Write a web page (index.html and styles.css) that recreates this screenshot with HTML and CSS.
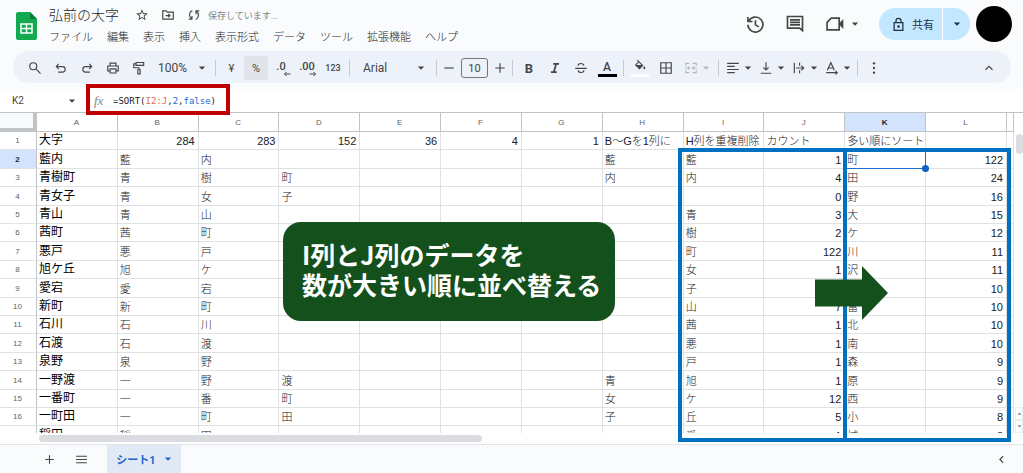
FILE: index.html
```html
<!DOCTYPE html>
<html lang="ja">
<head>
  <meta charset="UTF-8"/>
  <meta name="viewport" content="width=device-width, initial-scale=1.0"/>
  <title>弘前の大字</title>
  <link rel="stylesheet" href="styles.css">
</head>
<body>

<svg class="sprite" aria-hidden="true">
  <symbol id="caret" viewBox="0 0 8 8"><path d="M0.8 2.4h6.4L4 5.8z" fill="currentColor"/></symbol>
</svg>

<header class="top">
  <svg class="logo" viewBox="0 0 22 28">
    <path d="M2 0h12l7 7v19a2 2 0 0 1-2 2H2a2 2 0 0 1-2-2V2a2 2 0 0 1 2-2z" fill="#12a94f"/>
    <path d="M14 0l7 7h-7z" fill="#0b7f39"/>
    <path d="M5 12h11v9H5zM5 16.500h11M10.500 12v9" fill="none" stroke="#fff" stroke-width="1.500"/>
  </svg>

  <div class="doc">
    <div class="title-row">
      <h1>弘前の大字</h1>
      <button class="mini" aria-label="スター"><svg viewBox="0 0 24 24"><path d="M22 9.24l-7.19-.62L12 2 9.19 8.63 2 9.24l5.46 4.73L5.82 21 12 17.27 18.18 21l-1.63-7.03L22 9.24zM12 15.4l-3.76 2.27 1-4.28-3.32-2.88 4.38-.38L12 6.1l1.71 4.04 4.38.38-3.32 2.88 1 4.28L12 15.4z" fill="currentColor"/></svg></button>
      <button class="mini" aria-label="移動"><svg viewBox="0 0 24 24"><path d="M3 5h6l2 2h10v12H3z M8 13h7 M12.5 10l3 3-3 3" class="line"/></svg></button>
      <button class="mini" aria-label="同期"><svg viewBox="0 0 24 24"><path d="M9 4.500a8 8 0 0 0-1 14 M3 19h5.500v-5.500 M15 19.500a8 8 0 0 0 1-14 M21 5h-5.500v5.500" class="line"/></svg></button>
      <span class="status">保存しています...</span>
    </div>
    <nav class="menu">
      <button>ファイル</button>
      <button>編集</button>
      <button>表示</button>
      <button>挿入</button>
      <button>表示形式</button>
      <button>データ</button>
      <button>ツール</button>
      <button>拡張機能</button>
      <button>ヘルプ</button>
    </nav>
  </div>

  <div class="actions">
    <button class="action" aria-label="変更履歴"><svg viewBox="0 0 24 24"><path d="M4.500 8.500A9 9 0 1 1 3.500 13 M3.500 3.500V9H9 M12.500 7.500V13l4 2.500" class="line"/></svg></button>
    <button class="action" aria-label="コメント"><svg viewBox="0 0 24 24"><path d="M3 3h18v17l-3.500-3H3z M6 7h12M6 10h12M6 13h12" class="line"/></svg></button>
    <button class="action meet" aria-label="会議"><svg viewBox="0 0 24 24"><path d="M7.500 5H17v14H2.500v-9z" class="line"/><path d="M17 11l5-5v12l-5-5z" fill="currentColor"/></svg><svg class="caret"><use href="#caret"/></svg></button>
    <div class="share">
      <button class="share-main"><svg viewBox="0 0 24 24"><path d="M5 9h14v12.500H5z M8 9V6a4 4 0 0 1 8 0v3" class="line"/><circle cx="12" cy="15" r="2" fill="currentColor"/></svg>共有</button>
      <button class="share-more" aria-label="共有オプション"><svg class="caret"><use href="#caret"/></svg></button>
    </div>
    <button class="avatar" aria-label="アカウント"></button>
  </div>
</header>

<div class="toolbar" role="toolbar">
  <button class="tool" aria-label="検索"><svg viewBox="0 0 24 24"><path d="M14 14l7.500 7.500" class="line"/><circle cx="9" cy="9" r="6" class="line"/></svg></button>
  <button class="tool" aria-label="元に戻す"><svg viewBox="0 0 24 24"><path d="M8 5L4 9.500 8 14 M4 9.500h10.500a4.700 4.700 0 0 1 0 9.500H7" class="line"/></svg></button>
  <button class="tool" aria-label="やり直し"><svg viewBox="0 0 24 24"><path d="M16 5l4 4.500-4 4.500 M20 9.500H9.500a4.700 4.700 0 0 0 0 9.500H17" class="line"/></svg></button>
  <button class="tool" aria-label="印刷"><svg viewBox="0 0 24 24"><path d="M7 8V3.500h10V8 M7 17H3V8.500h18V17h-4 M7 13.500h10v7H7z" class="line"/></svg></button>
  <button class="tool" aria-label="書式を貼り付け"><svg viewBox="0 0 24 24"><path d="M7 2.500h13v5H7z M7 5H3v6.500h9V15 M10 15h4v7h-4z" class="line"/></svg></button>
  <label class="picker zoom">
    <select aria-label="ズーム"><option>100%</option><option>75%</option><option>50%</option></select>
    <svg class="caret"><use href="#caret"/></svg>
  </label>
  <span class="sep"></span>
  <button class="tool narrow">¥</button>
  <button class="tool percent">%</button>
  <button class="tool decimal" aria-label="小数点以下の桁数を減らす"><span>.0</span><svg viewBox="0 0 8 6"><path d="M7.500 3h-6M3.500 1l-2 2 2 2" class="thin"/></svg></button>
  <button class="tool decimal" aria-label="小数点以下の桁数を増やす"><span>.00</span><svg viewBox="0 0 8 6"><path d="M.5 3h6M4.500 1l2 2-2 2" class="thin"/></svg></button>
  <button class="tool number">123</button>
  <span class="sep"></span>
  <label class="picker font">
    <select aria-label="フォント"><option>Arial</option><option>Roboto</option></select>
    <svg class="caret"><use href="#caret"/></svg>
  </label>
  <span class="sep"></span>
  <button class="tool step" aria-label="縮小"><svg viewBox="0 0 24 24"><path d="M4 12h16" class="line"/></svg></button>
  <input class="size" aria-label="フォントサイズ" value="10">
  <button class="tool step" aria-label="拡大"><svg viewBox="0 0 24 24"><path d="M4 12h16M12 4v16" class="line"/></svg></button>
  <span class="sep"></span>
  <button class="tool bold">B</button>
  <button class="tool" aria-label="斜体"><svg viewBox="0 0 24 24"><path d="M9 5h10M5 19h10M14 5l-4 14" class="line heavy"/></svg></button>
  <button class="tool" aria-label="取り消し線"><svg viewBox="0 0 24 24"><path d="M2 12.500h20 M17 8c-1-5-10-5-10 0 M7 16c1 5 10 5 10 0" class="line"/></svg></button>
  <button class="tool color"><span>A</span></button>
  <span class="sep"></span>
  <button class="tool fill" aria-label="塗りつぶし"><svg viewBox="0 0 24 24"><path d="M7 2l10 10-6 6-7-7 6-6" class="line"/><path d="M4 11h13l-6 7zM20 13c3 4 2 6 0 6s-3-2 0-6z" fill="currentColor"/></svg></button>
  <button class="tool" aria-label="枠線"><svg viewBox="0 0 24 24"><path d="M3 3h18v18H3zM3 12h18M12 3v18" class="line"/></svg></button>
  <button class="tool split merge" aria-label="セルを結合" disabled><svg viewBox="0 0 24 24"><path d="M9 4H3v4M15 4h6v4M9 20H3v-4M15 20h6v-4M2 12h7M22 12h-7M7 9.500L9.500 12 7 14.500M17 9.500L14.500 12l2.500 2.500" class="line"/></svg><svg class="caret"><use href="#caret"/></svg></button>
  <span class="sep"></span>
  <button class="tool split" aria-label="水平方向の配置"><svg viewBox="0 0 24 24"><path d="M2 4h20M2 9.300h13M2 14.600h20M2 20h13" class="line"/></svg><svg class="caret"><use href="#caret"/></svg></button>
  <button class="tool split" aria-label="垂直方向の配置"><svg viewBox="0 0 24 24"><path d="M12 2v13M7.500 11l4.500 4.500 4.500-4.500M3 21h18" class="line"/></svg><svg class="caret"><use href="#caret"/></svg></button>
  <button class="tool split" aria-label="折り返し"><svg viewBox="0 0 24 24"><path d="M4 3v18M13 3v5M13 16v5M7 12h13M16 8l4 4-4 4" class="line"/></svg><svg class="caret"><use href="#caret"/></svg></button>
  <button class="tool split" aria-label="回転"><svg viewBox="0 0 24 24"><path d="M4 16l6-13 6 13M6 12h8M2 20h19M18 17l3 3-3 3" class="line"/></svg><svg class="caret"><use href="#caret"/></svg></button>
  <span class="sep"></span>
  <button class="tool" aria-label="その他"><svg viewBox="0 0 24 24"><g fill="currentColor"><circle cx="12" cy="4" r="2"/><circle cx="12" cy="12" r="2"/><circle cx="12" cy="20" r="2"/></g></svg></button>
  <button class="tool collapse" aria-label="メニューを隠す"><svg viewBox="0 0 24 24"><path d="M6 15l6-6 6 6" class="line"/></svg></button>
</div>

<div class="formula-bar">
  <label class="name-box">
    <input aria-label="名前ボックス" value="K2">
    <svg class="caret"><use href="#caret"/></svg>
  </label>
  <span class="fx">fx</span>
  <div class="formula" role="textbox" aria-label="数式" contenteditable="true" spellcheck="false">=SORT(<span class="range">I2:J</span>,<span class="value">2</span>,<span class="value">false</span>)</div>
  <div class="mark-formula"></div>
</div>

<main class="sheet">
  <div class="viewport">
    <table class="grid">
      <colgroup><col class="col-head"><col span="12"><col class="col-rest"></colgroup>
      <thead>
        <tr><th class="corner"></th><th>A</th><th>B</th><th>C</th><th>D</th><th>E</th><th>F</th><th>G</th><th>H</th><th>I</th><th>J</th><th class="on">K</th><th>L</th><th></th></tr>
      </thead>
      <tbody>
        <tr><th>1</th><td>大字</td><td class="n">284</td><td class="n">283</td><td class="n">152</td><td class="n">36</td><td class="n">4</td><td class="n">1</td><td>B～Gを1列に</td><td>H列を重複削除</td><td>カウント</td><td>多い順にソート</td><td class="n"></td><td></td></tr>
        <tr><th class="on">2</th><td>藍内</td><td>藍</td><td>内</td><td></td><td></td><td></td><td></td><td>藍</td><td>藍</td><td class="n">1</td><td class="active">町</td><td class="n">122</td><td></td></tr>
        <tr><th>3</th><td>青樹町</td><td>青</td><td>樹</td><td>町</td><td></td><td></td><td></td><td>内</td><td>内</td><td class="n">4</td><td>田</td><td class="n">24</td><td></td></tr>
        <tr><th>4</th><td>青女子</td><td>青</td><td>女</td><td>子</td><td></td><td></td><td></td><td></td><td></td><td class="n">0</td><td>野</td><td class="n">16</td><td></td></tr>
        <tr><th>5</th><td>青山</td><td>青</td><td>山</td><td></td><td></td><td></td><td></td><td></td><td>青</td><td class="n">3</td><td>大</td><td class="n">15</td><td></td></tr>
        <tr><th>6</th><td>茜町</td><td>茜</td><td>町</td><td></td><td></td><td></td><td></td><td></td><td>樹</td><td class="n">2</td><td>ケ</td><td class="n">12</td><td></td></tr>
        <tr><th>7</th><td>悪戸</td><td>悪</td><td>戸</td><td></td><td></td><td></td><td></td><td></td><td>町</td><td class="n">122</td><td>川</td><td class="n">11</td><td></td></tr>
        <tr><th>8</th><td>旭ケ丘</td><td>旭</td><td>ケ</td><td></td><td></td><td></td><td></td><td></td><td>女</td><td class="n">1</td><td>沢</td><td class="n">11</td><td></td></tr>
        <tr><th>9</th><td>愛宕</td><td>愛</td><td>宕</td><td></td><td></td><td></td><td></td><td></td><td>子</td><td class="n"></td><td></td><td class="n">10</td><td></td></tr>
        <tr><th>10</th><td>新町</td><td>新</td><td>町</td><td></td><td></td><td></td><td></td><td></td><td>山</td><td class="n">7</td><td>富</td><td class="n">10</td><td></td></tr>
        <tr><th>11</th><td>石川</td><td>石</td><td>川</td><td></td><td></td><td></td><td></td><td></td><td>茜</td><td class="n">1</td><td>北</td><td class="n">10</td><td></td></tr>
        <tr><th>12</th><td>石渡</td><td>石</td><td>渡</td><td></td><td></td><td></td><td></td><td></td><td>悪</td><td class="n">1</td><td>南</td><td class="n">10</td><td></td></tr>
        <tr><th>13</th><td>泉野</td><td>泉</td><td>野</td><td></td><td></td><td></td><td></td><td></td><td>戸</td><td class="n">1</td><td>森</td><td class="n">9</td><td></td></tr>
        <tr><th>14</th><td>一野渡</td><td>一</td><td>野</td><td>渡</td><td></td><td></td><td></td><td>青</td><td>旭</td><td class="n">1</td><td>原</td><td class="n">9</td><td></td></tr>
        <tr><th>15</th><td>一番町</td><td>一</td><td>番</td><td>町</td><td></td><td></td><td></td><td>女</td><td>ケ</td><td class="n">12</td><td>西</td><td class="n">9</td><td></td></tr>
        <tr><th>16</th><td>一町田</td><td>一</td><td>町</td><td>田</td><td></td><td></td><td></td><td>子</td><td>丘</td><td class="n">5</td><td>小</td><td class="n">8</td><td></td></tr>
        <tr><th>17</th><td>稲田</td><td>稲</td><td>田</td><td></td><td></td><td></td><td></td><td></td><td>愛</td><td class="n">1</td><td>城</td><td class="n">8</td><td></td></tr>
      </tbody>
    </table>
    <div class="vscroll">
      <span class="vthumb"></span>
      <span class="arrow-btn"><svg viewBox="0 0 8 8"><path d="M1 6h6L4 2z" fill="#80868b"/></svg></span>
      <span class="arrow-btn"><svg viewBox="0 0 8 8"><path d="M1 2h6L4 6z" fill="#80868b"/></svg></span>
    </div>
  </div>
  <div class="hscroll"><span class="hthumb"></span></div>

  <div class="frame frame-source"></div>
  <div class="frame frame-result"></div>
  <svg class="big-arrow" viewBox="0 0 73 54"><path d="M0 13.500h47V0l26 27-26 27V40.500H0z" fill="#14501c"/></svg>
  <p class="callout">I列とJ列のデータを<br>数が大きい順に並べ替える</p>
</main>

<footer class="tabs">
  <button class="tab-btn" aria-label="シートを追加"><svg viewBox="0 0 24 24"><path d="M4 12h16M12 4v16" class="line"/></svg></button>
  <button class="tab-btn" aria-label="すべてのシート"><svg viewBox="0 0 24 24"><path d="M2 6h20M2 12h20M2 18h20" class="line"/></svg></button>
  <button class="tab">シート1<svg class="caret"><use href="#caret"/></svg></button>
  <button class="tab-btn side" aria-label="サイドパネルを表示"><svg viewBox="0 0 24 24"><path d="M15 6l-6 6 6 6" class="line"/></svg></button>
</footer>

</body>
</html>
```
FILE: styles.css
```css
* {
  box-sizing: border-box;
}

body {
  margin: 0;
  height: 100vh;
  display: flex;
  flex-direction: column;
  overflow: hidden;
  background: #f9fbfd;
  color: #444746;
  font-family: Roboto, "Noto Sans CJK JP", sans-serif;
  font-size: 11px;
}

button, input, select {
  margin: 0;
  padding: 0;
  border: none;
  background: none;
  color: inherit;
  font: inherit;
}

button {
  display: flex;
  align-items: center;
  justify-content: center;
  flex-shrink: 0;
  cursor: pointer;
}

svg {
  flex-shrink: 0;
}

.sprite {
  position: absolute;
  width: 0;
  height: 0;
}

.line {
  fill: none;
  stroke: currentColor;
  stroke-width: 2;
}

.heavy {
  stroke-width: 3;
}

.thin {
  fill: none;
  stroke: currentColor;
  stroke-width: 1;
}

.caret {
  width: 8px;
  height: 8px;
}

/* header */
.top {
  display: flex;
  height: 51px;
  flex-shrink: 0;
  padding: 0 11px 0 16px;
}

.logo {
  width: 22px;
  height: 28px;
  margin: 12px 11px 0 0;
}

.doc {
  flex: 1;
  padding-top: 5px;
}

.title-row {
  display: flex;
  align-items: center;
  height: 20px;
}

.title-row h1 {
  margin: 0 15px 0 0;
  font-size: 14px;
  line-height: 20px;
  font-weight: 300;
  color: #1f1f1f;
}

.mini {
  width: 16px;
  margin-right: 10px;
}

.mini svg {
  width: 14px;
  height: 14px;
}

.status {
  margin-left: -4px;
  font-size: 9px;
  color: #80868b;
}

.menu {
  display: flex;
  gap: 14px;
  height: 22px;
  font-weight: 300;
  color: #1f1f1f;
}

.actions {
  display: flex;
  align-items: center;
  height: 48px;
}

.action {
  width: 40px;
}

.action svg:first-child {
  width: 20px;
  height: 20px;
}

.action.meet {
  width: 54px;
  gap: 6px;
}

.share {
  display: flex;
  width: 91px;
  height: 32px;
  margin: 0 6px 0 10px;
  border-radius: 16px;
  overflow: hidden;
  background: #c2e7ff;
  color: #1f2f40;
}

.share-main {
  flex: 1;
  gap: 6px;
  padding-left: 4px;
  border-right: 1px solid #fff;
}

.share-main svg {
  width: 15px;
  height: 15px;
}

.share-more {
  width: 27px;
}

.avatar {
  width: 36px;
  height: 36px;
  border-radius: 50%;
  background: #000;
}

/* toolbar */
.toolbar {
  display: flex;
  align-items: center;
  height: 32px;
  flex-shrink: 0;
  margin: 0 12px 6px 13px;
  padding: 2px 9px 0;
  border-radius: 16px;
  background: #edf2fa;
}

.tool {
  width: 26px;
  height: 24px;
}

.tool svg {
  width: 14px;
  height: 14px;
}

.tool .caret,
.action .caret {
  width: 8px;
  height: 8px;
}

.sep {
  width: 1px;
  height: 16px;
  flex-shrink: 0;
  margin: 0 3px;
  background: #c7cbd1;
}

.picker {
  display: flex;
  align-items: center;
  flex-shrink: 0;
  padding-right: 6px;
}

.picker select {
  flex: 1;
  min-width: 0;
  appearance: none;
  font-size: 12px;
}

.zoom {
  width: 60px;
  padding-left: 6px;
}

.font {
  width: 80px;
  padding-left: 10px;
  padding-right: 8px;
}

.narrow {
  width: 25px;
}

.percent {
  width: 24px;
  border-radius: 2px;
  background: #e1e5eb;
}

.decimal {
  position: relative;
  font-size: 11px;
  font-weight: 500;
  padding-bottom: 4px;
}

.decimal svg {
  position: absolute;
  right: 3px;
  bottom: 3px;
  width: 8px;
  height: 6px;
}

.number {
  font-size: 9px;
  font-weight: 500;
}

.step {
  width: 18px;
}

.size {
  width: 27px;
  height: 20px;
  margin: 0 3px;
  border: 1px solid #747775;
  border-radius: 3px;
  text-align: center;
}

.bold {
  font-size: 13px;
  font-weight: 700;
}

.color span {
  width: 19px;
  line-height: 14px;
  border-bottom: 3px solid #000;
  font-size: 12px;
  font-weight: 500;
}

.fill svg {
  width: 18px;
  height: 18px;
  padding-bottom: 2px;
  border-bottom: 3px solid #fff;
}

.split {
  width: 33px;
  gap: 4px;
}

.merge {
  width: 36px;
  color: #b4b8bd;
}

.collapse {
  margin-left: auto;
}

/* formula bar */
.formula-bar {
  position: relative;
  display: flex;
  align-items: center;
  height: 23px;
  flex-shrink: 0;
  background: #fff;
}

.name-box {
  display: flex;
  align-items: center;
  width: 94px;
  padding-left: 12px;
}

.name-box input {
  width: 56px;
  font-size: 10px;
}

.fx {
  width: 19px;
  font-family: "Liberation Serif", serif;
  font-size: 13px;
  font-style: italic;
  color: #80868b;
}

.formula {
  flex: 1;
  font-family: "DejaVu Sans Mono", monospace;
  font-size: 9px;
  color: #202124;
  outline: none;
}

.range {
  color: #e06c4c;
}

.value {
  color: #1967d2;
}

.mark-formula {
  position: absolute;
  left: 86px;
  top: -5px;
  width: 144px;
  height: 31px;
  border: 4px solid #c00000;
  z-index: 2;
  pointer-events: none;
}

/* sheet */
.sheet {
  position: relative;
  flex: 1;
  min-height: 0;
  display: flex;
  flex-direction: column;
  background: #fff;
}

.viewport {
  flex: 1;
  min-height: 0;
  display: flex;
  align-items: stretch;
  overflow: hidden;
}

.grid {
  flex: 1;
  align-self: flex-start;
  width: 100%;
  table-layout: fixed;
  border-collapse: separate;
  border-spacing: 0;
  font-family: "Liberation Sans", "Noto Sans CJK JP", sans-serif;
  color: #202124;
}

.col-head {
  width: 37px;
}

.col-rest {
  width: 7px;
}

.grid th,
.grid td {
  height: 18px;
  padding: 0 3px 0 2px;
  border-right: 1px solid #dfe1e3;
  border-bottom: 1px solid #dfe1e3;
  line-height: 15px;
  white-space: nowrap;
}

.grid tbody tr:nth-child(5n+2) > *,
.grid tbody tr:nth-child(5n+4) > * {
  height: 19px;
}

.grid td {
  font-size: 11px;
  font-weight: 300;
  text-align: left;
  vertical-align: bottom;
}

.grid td:nth-child(2) {
  font-size: 12px;
  font-weight: 400;
  vertical-align: middle;
  color: #000;
}

.grid .n {
  text-align: right;
}

.grid th {
  font-size: 8px;
  font-weight: 400;
  color: #5f6368;
}

.grid thead th {
  height: 20px;
  border-top: 1px solid #c0c0c0;
  border-color: #c0c4c7;
}

.grid tbody th {
  border-right-color: #c0c4c7;
}

.grid th.on {
  background: #d3e3fd;
  font-weight: 700;
  color: #1f1f1f;
}

.grid .corner {
  background: #f8f9fa;
  border-right: 4px solid #c0c4c7;
  border-bottom: 4px solid #c0c4c7;
}

.grid .active {
  position: relative;
  border-right-color: #1a6fd0;
  border-bottom-color: #1a6fd0;
}

.grid .active::after {
  content: "";
  position: absolute;
  right: -4px;
  bottom: -4px;
  width: 7px;
  height: 7px;
  border-radius: 50%;
  background: #0b66c3;
  z-index: 1;
}

.vscroll {
  display: flex;
  flex-direction: column;
  align-items: flex-end;
  width: 9px;
  flex-shrink: 0;
  padding-top: 21px;
  border-top: 1px solid #c0c4c7;
}

.vthumb {
  width: 7px;
  height: 20px;
  margin-bottom: auto;
  border-radius: 4px;
  background: #dadce0;
}

.arrow-btn {
  display: flex;
  align-items: center;
  justify-content: center;
  width: 8px;
  height: 13px;
  border: 1px solid #eceef0;
}

.arrow-btn svg {
  width: 5px;
  height: 5px;
}

.hscroll {
  height: 11px;
  padding: 2px 0 0 39px;
}

.hthumb {
  display: block;
  width: 45%;
  height: 7px;
  border-radius: 4px;
  background: #dadce0;
}

/* annotations over the sheet */
.frame {
  position: absolute;
  top: 36px;
  bottom: 2px;
  border: 4px solid #0070c0;
}

.frame-source {
  right: 176px;
  width: 169px;
}

.frame-result {
  right: 12px;
  width: 168px;
}

.big-arrow {
  position: absolute;
  right: 135px;
  top: 154px;
  width: 73px;
  height: 54px;
}

.callout {
  position: absolute;
  left: 283px;
  top: 110px;
  margin: 0;
  padding: 17px 14px 22px 19px;
  border-radius: 18px;
  background: #14501c;
  color: #fff;
  font-family: "Noto Sans CJK JP", sans-serif;
  font-size: 25px;
  font-weight: 700;
  line-height: 30px;
  white-space: nowrap;
}

/* sheet tabs */
.tabs {
  display: flex;
  height: 29px;
  flex-shrink: 0;
  padding: 0 9px 0 33px;
  border-top: 1px solid #e1e3e6;
}

.tab-btn {
  width: 32px;
}

.tab-btn svg {
  width: 13px;
  height: 13px;
}

.tab {
  gap: 8px;
  width: 74px;
  margin-left: 10px;
  background: #e1e9f7;
  color: #1967d2;
  font-weight: 700;
}

.side {
  width: 26px;
  margin-left: auto;
}
```
